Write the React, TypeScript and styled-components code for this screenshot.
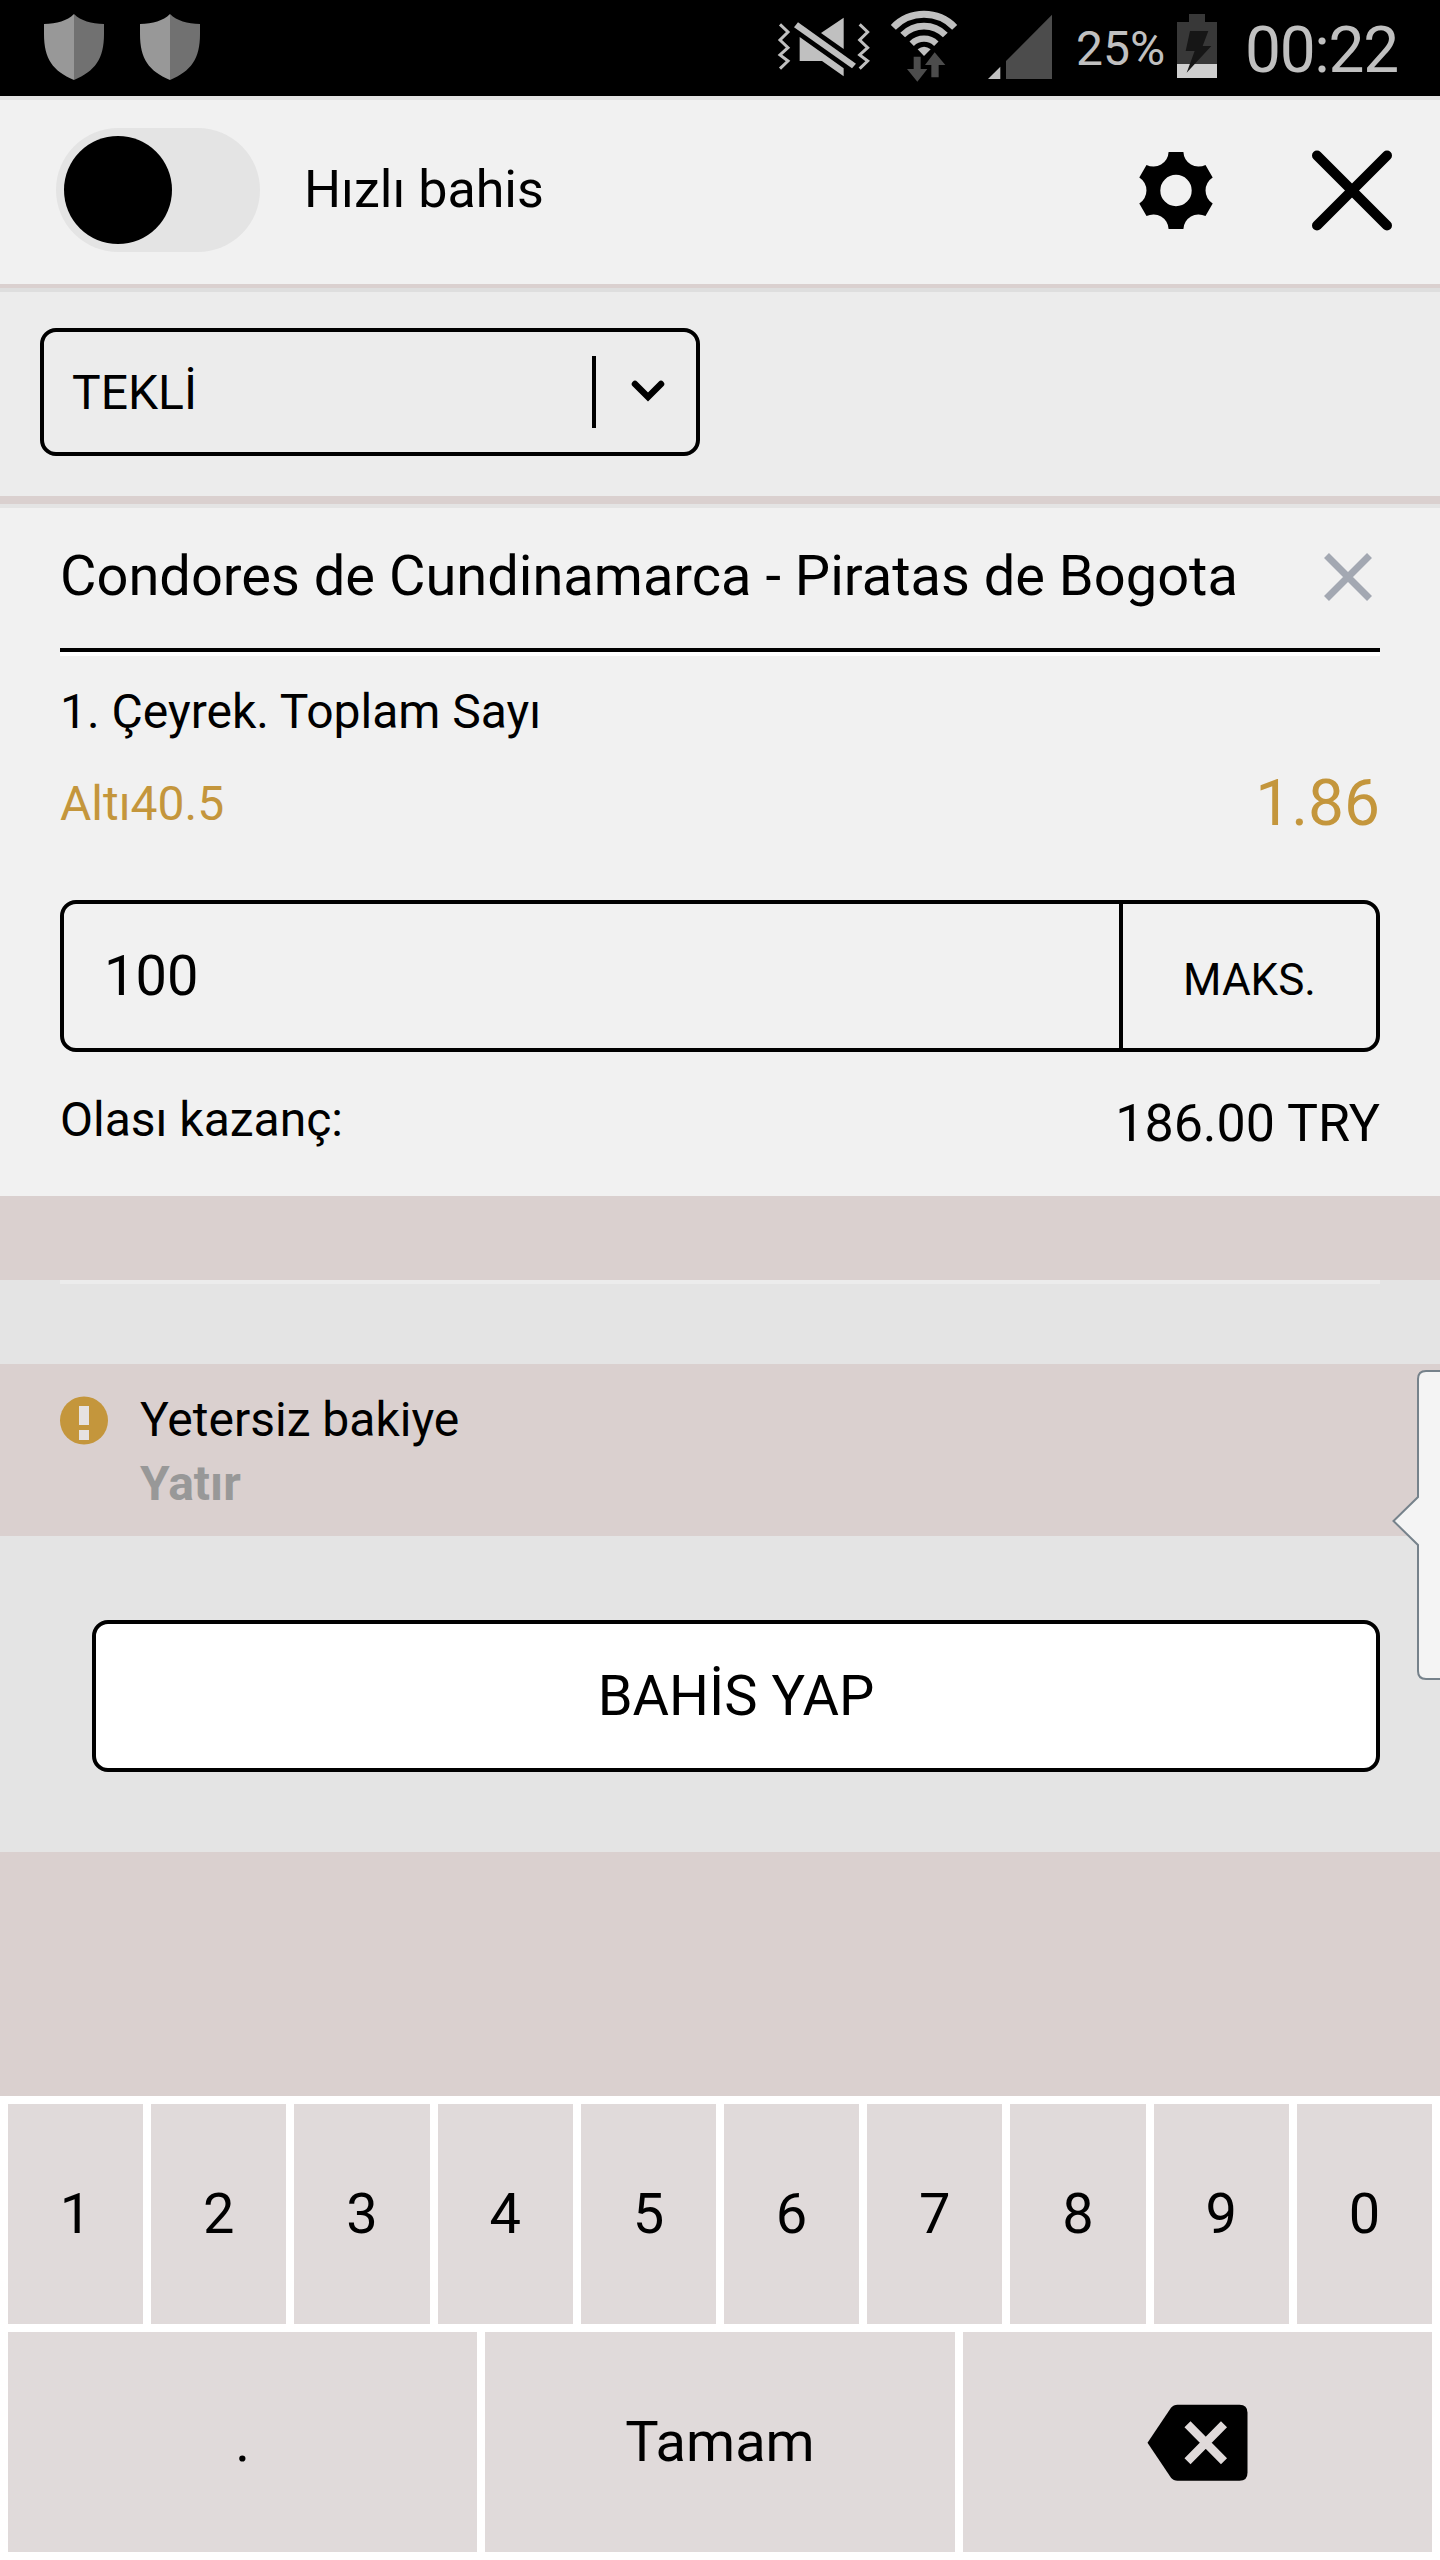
import React from "react";
import styled, { createGlobalStyle } from "styled-components";

const GlobalStyle = createGlobalStyle`
  * { box-sizing: border-box; }
  body {
    margin: 0;
    background: #dad0cf;
    font-family: Roboto, "Liberation Sans", sans-serif;
    color: #000;
  }
`;

const Screen = styled.div`
  position: relative;
  display: flex;
  flex-direction: column;
  width: 1440px;
  height: 2560px;
  overflow: hidden;
  background: #dad0cf;
`;

const Text = styled.span<{
  $size: number;
  $line?: number;
  $color?: string;
  $weight?: number;
  $spacing?: number;
}>`
  font-size: ${(p) => p.$size}px;
  line-height: ${(p) => p.$line ?? 64}px;
  color: ${(p) => p.$color ?? "#000"};
  font-weight: ${(p) => p.$weight ?? 400};
  letter-spacing: ${(p) => p.$spacing ?? 0}px;
  white-space: nowrap;
`;

/* Status bar */

const StatusBar = styled.div`
  display: flex;
  justify-content: space-between;
  height: 96px;
  padding: 0 42px 0 44px;
  background: #000;
`;

const Notifications = styled.div`
  display: flex;
  gap: 36px;
  padding-top: 14px;
`;

const Indicators = styled.div`
  display: flex;
  align-items: flex-start;
  padding-top: 5px;
`;

const Glyph = styled.svg<{ $gap?: number }>`
  display: block;
  flex: none;
  margin-left: ${(p) => p.$gap ?? 0}px;
`;

const Percent = styled(Text)`
  width: 90px;
  margin: 12px 0 0 23px;
`;

const Clock = styled(Text)`
  width: 153px;
  margin: 14px 0 0 27px;
`;

/* Header */

const Header = styled.header`
  display: flex;
  align-items: center;
  height: 192px;
  padding: 0 44px 4px 56px;
  border-top: 4px solid #e3e3e3;
  border-bottom: 4px solid #dad0cf;
  background: #f1f1f1;
`;

const Toggle = styled.div`
  display: flex;
  align-items: center;
  width: 204px;
  height: 124px;
  padding: 0 8px;
  border-radius: 62px;
  background: #e4e4e4;
`;

const Knob = styled.div`
  width: 108px;
  height: 108px;
  border-radius: 50%;
  background: #000;
`;

const HeaderLabel = styled(Text)`
  flex: 1;
  margin-left: 44px;
`;

/* Bet type */

const TypeBar = styled.div`
  display: flex;
  height: 208px;
  padding: 36px 40px 0;
  border-top: 4px solid #dedede;
  background: #ececec;
`;

const Select = styled.div`
  display: flex;
  align-items: center;
  width: 660px;
  height: 128px;
  padding-left: 28px;
  border: 4px solid #000;
  border-radius: 16px;
`;

const SelectValue = styled(Text)`
  flex: 1;
  padding-top: 2px;
`;

const SelectArrow = styled.div`
  display: flex;
  align-items: center;
  justify-content: center;
  width: 104px;
  height: 72px;
  padding: 0 0 2px 4px;
  border-left: 4px solid #000;
`;

/* Bet card */

const Card = styled.section`
  height: 692px;
  margin-top: 8px;
  padding: 0 60px;
  border-top: 4px solid #e4e4e4;
  background: #f1f1f1;
`;

const MatchRow = styled.div`
  display: flex;
  align-items: center;
  justify-content: space-between;
  height: 148px;
  padding: 0 6px 7px 0;
  border-bottom: 4px solid #fff;
  box-shadow: inset 0 -4px 0 #000;
`;

const MatchName = styled(Text)`
  padding-bottom: 2px;
`;

const Market = styled(Text)`
  display: block;
  margin-top: 28px;
`;

const OutcomeRow = styled.div`
  display: flex;
  justify-content: space-between;
  margin-top: 32px;
`;

const StakeBox = styled.div`
  display: flex;
  height: 152px;
  margin-top: 64px;
  border: 4px solid #000;
  border-radius: 16px;
`;

const StakeValue = styled.div`
  display: flex;
  align-items: center;
  flex: 1;
  padding-left: 40px;
`;

const MaxButton = styled.div`
  display: flex;
  align-items: center;
  justify-content: center;
  width: 257px;
  padding-top: 8px;
  border-left: 4px solid #000;
`;

const PayoutRow = styled.div`
  display: flex;
  align-items: flex-start;
  justify-content: space-between;
  padding-top: 36px;
`;

const PayoutLabel = styled(Text)`
  display: block;
`;

/* Notices and submit */

const Divider = styled.div`
  height: 84px;
  margin-top: 84px;
  padding: 0 60px;
  background: #e4e4e4;

  &::before {
    content: "";
    display: block;
    height: 4px;
    background: #ececec;
  }
`;

const Notice = styled.div`
  display: flex;
  height: 172px;
  padding: 24px 60px 0;
`;

const NoticeText = styled.div`
  display: flex;
  flex-direction: column;
  margin-left: 32px;
`;

const SubmitArea = styled.div`
  height: 316px;
  padding: 84px 60px 0 92px;
  background: #e4e4e4;
`;

const Submit = styled.div`
  display: flex;
  align-items: center;
  justify-content: center;
  height: 152px;
  border: 4px solid #000;
  border-radius: 16px;
  background: #fff;
`;

/* Keypad */

const Keypad = styled.div`
  display: grid;
  grid-template-rows: 220px 220px;
  gap: 8px;
  height: 464px;
  margin-top: auto;
  padding: 8px;
  background: #fff;
`;

const KeyRow = styled.div<{ $columns: number }>`
  display: grid;
  grid-template-columns: repeat(${(p) => p.$columns}, 1fr);
  gap: 8px;
`;

const Key = styled.div`
  display: flex;
  align-items: center;
  justify-content: center;
  background: #e0dada;
`;

const EdgeBubble = styled.svg`
  position: absolute;
  top: 1368px;
  right: 0;
`;

const Shield = () => (
  <Glyph width="60" height="66" viewBox="0 0 60 66">
    <path d="M30 0C23 7 13 9.500 0 10V20C0 45 9 57 30 66Z" fill="#989898" />
    <path d="M30 0C37 7 47 9.500 60 10V20C60 45 51 57 30 66Z" fill="#717171" />
  </Glyph>
);

const MuteVibrate = () => (
  <Glyph width="94" height="85" viewBox="21 0 282 255" fill="#c0c0c0">
    <path d="M30 58L54 81L30 105L54 128L30 150L54 168L30 191" fill="none" stroke="#c0c0c0" strokeWidth="9" />
    <path d="M269 58L293 81L269 105L293 128L269 150L293 168L269 191" fill="none" stroke="#c0c0c0" strokeWidth="9" />
    <path d="M84 52L258 176L246 190L72 67Z" />
    <path d="M221 38V132L153 84Z" />
    <path d="M89 96L221 190V214L156 168H89Z" />
  </Glyph>
);

const Wifi = () => (
  <Glyph $gap={19} width="68" height="85" viewBox="360 0 204 255">
    <g fill="none" stroke="#c0c0c0">
      <path d="M370 67A128 128 0 0 1 554 67" strokeWidth="21" />
      <path d="M398 90A90 90 0 0 1 526 90" strokeWidth="20" />
      <path d="M425 116A53 53 0 0 1 499 116" strokeWidth="19" />
    </g>
    <path d="M443 133Q462 118 482 133L462 153Z" fill="#c0c0c0" />
    <path d="M431 155H452V192H472L442 230L411 192H431Z" fill="#4c4c4c" />
    <path d="M494 142L526 180H506V217H484V180H465Z" fill="#4c4c4c" />
  </Glyph>
);

const Signal = () => (
  <Glyph $gap={29} width="66" height="85" viewBox="651 0 198 255">
    <path d="M654 222L691 185V222Z" fill="#c0c0c0" />
    <path d="M708 222V168L846 29V222Z" fill="#4c4c4c" />
  </Glyph>
);

const Battery = () => (
  <Glyph $gap={10} width="42" height="85" viewBox="1218 0 126 255">
    <path d="M1221 51H1257V27H1305V51H1341V177H1221Z" fill="#383838" />
    <path d="M1221 177H1341V219H1221Z" fill="#cfcfcf" />
    <path d="M1260 78H1315L1298 123H1324L1250 203L1274 138H1247Z" fill="#161616" />
  </Glyph>
);

const Gear = () => (
  <Glyph width="80" height="80" viewBox="-40 -40.500 80 80">
    <path
      fillRule="evenodd"
      d="M-7.400 -38.500H7.400A15.200 15.200 0 0 0 29.500 -25.600L36.700 -12.900A15.200 15.200 0 0 0 36.700 12.900L29.500 25.600A15.200 15.200 0 0 0 7.400 38.500H-7.400A15.200 15.200 0 0 0 -29.500 25.600L-36.700 12.900A15.200 15.200 0 0 0 -36.700 -12.900L-29.500 -25.600A15.200 15.200 0 0 0 -7.400 -38.500ZM0 -15.700A15.700 15.700 0 1 0 0 15.700A15.700 15.700 0 1 0 0 -15.700Z"
    />
  </Glyph>
);

const Close = () => (
  <Glyph $gap={92} width="88" height="88" viewBox="-44 -44 88 88">
    <path d="M-35 -34.500L35 35.500M35 -34.500L-35 35.500" stroke="#000" strokeWidth="10" strokeLinecap="round" />
  </Glyph>
);

const Remove = () => (
  <Glyph width="52" height="52" viewBox="-26 -26 52 52">
    <path d="M-21.500 -21.500L21.500 21.500M21.500 -21.500L-21.500 21.500" stroke="#a3a8b2" strokeWidth="7" />
  </Glyph>
);

const Chevron = () => (
  <Glyph width="40" height="28" viewBox="0 0 40 28">
    <path d="M7 7L20 20L33 7" fill="none" stroke="#000" strokeWidth="6.500" strokeLinecap="round" />
  </Glyph>
);

const Warning = () => (
  <Glyph width="48" height="64" viewBox="0 -8 48 64">
    <circle cx="24" cy="24.500" r="24" fill="#c4963c" />
    <path d="M19 10H29V29H19ZM19 34H29V44H19Z" fill="#e6e2e1" />
  </Glyph>
);

const Backspace = () => (
  <Glyph width="102" height="78" viewBox="-0.500 -0.800 102 78">
    <path d="M1 39L24.500 4Q27 1 31 1H93Q101 1 101 9V69Q101 77 93 77H31Q27 77 24.500 74Z" />
    <path d="M41 20.500L77.500 57.500M77.500 20.500L41 57.500" stroke="#e0dada" strokeWidth="8.500" />
  </Glyph>
);

const GOLD = "#c4963c";
const DIGITS = ["1", "2", "3", "4", "5", "6", "7", "8", "9", "0"];

export default function App() {
  return (
    <Screen>
      <GlobalStyle />
      <StatusBar>
        <Notifications>
          <Shield />
          <Shield />
        </Notifications>
        <Indicators>
          <MuteVibrate />
          <Wifi />
          <Signal />
          <Percent $size={48} $color="#c0c0c0">25%</Percent>
          <Battery />
          <Clock $size={64} $color="#c0c0c0" $spacing={-1.3}>00:22</Clock>
        </Indicators>
      </StatusBar>

      <Header>
        <Toggle>
          <Knob />
        </Toggle>
        <HeaderLabel $size={52}>Hızlı bahis</HeaderLabel>
        <Gear />
        <Close />
      </Header>

      <TypeBar>
        <Select>
          <SelectValue $size={48}>TEKLİ</SelectValue>
          <SelectArrow>
            <Chevron />
          </SelectArrow>
        </Select>
      </TypeBar>

      <Card>
        <MatchRow>
          <MatchName $size={56}>Condores de Cundinamarca - Piratas de Bogota</MatchName>
          <Remove />
        </MatchRow>
        <Market $size={48} $line={56}>1. Çeyrek. Toplam Sayı</Market>
        <OutcomeRow>
          <Text $size={48} $color={GOLD}>Altı40.5</Text>
          <Text $size={64} $color={GOLD}>1.86</Text>
        </OutcomeRow>
        <StakeBox>
          <StakeValue>
            <Text $size={56}>100</Text>
          </StakeValue>
          <MaxButton>
            <Text $size={44}>MAKS.</Text>
          </MaxButton>
        </StakeBox>
        <PayoutRow>
          <PayoutLabel $size={48}>Olası kazanç:</PayoutLabel>
          <PayoutLabel $size={52} $line={72}>186.00 TRY</PayoutLabel>
        </PayoutRow>
      </Card>

      <Divider />

      <Notice>
        <Warning />
        <NoticeText>
          <Text $size={48}>Yetersiz bakiye</Text>
          <Text $size={48} $weight={700} $color="#989898">Yatır</Text>
        </NoticeText>
      </Notice>

      <SubmitArea>
        <Submit>
          <Text $size={56}>BAHİS YAP</Text>
        </Submit>
      </SubmitArea>

      <Keypad>
        <KeyRow $columns={10}>
          {DIGITS.map((digit) => (
            <Key key={digit}>
              <Text $size={56}>{digit}</Text>
            </Key>
          ))}
        </KeyRow>
        <KeyRow $columns={3}>
          <Key>
            <Text $size={56}>.</Text>
          </Key>
          <Key>
            <Text $size={56}>Tamam</Text>
          </Key>
          <Key>
            <Backspace />
          </Key>
        </KeyRow>
      </Keypad>

      <EdgeBubble width="50" height="314" viewBox="0 0 50 314">
        <path
          d="M60 3H36Q28 3 28 11V129L3.500 153L28 177V303Q28 311 36 311H60"
          fill="#f4f4f4"
          stroke="#76828b"
          strokeWidth="2"
        />
      </EdgeBubble>
    </Screen>
  );
}
